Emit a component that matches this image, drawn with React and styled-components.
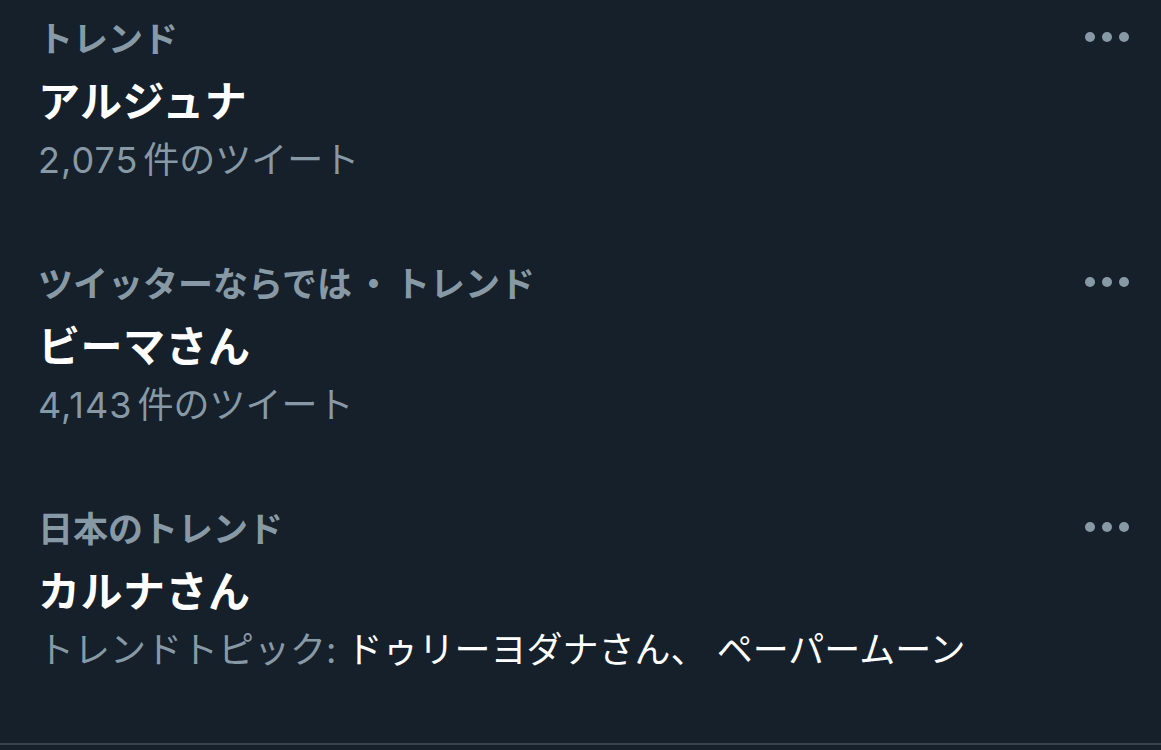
import styled, { createGlobalStyle } from 'styled-components';

const GlobalStyle = createGlobalStyle`
  html, body {
    margin: 0;
    padding: 0;
    background: #15202b;
  }
  body {
    font-family: "Noto Sans CJK JP", "Noto Sans", sans-serif;
  }
`;

const Page = styled.div`
  width: 1161px;
  height: 750px;
  background: #15202b;
  overflow: hidden;
`;

const List = styled.div`
  display: flex;
  flex-direction: column;
  padding-bottom: 8px;
  border-bottom: 2px solid #38444d;
`;

const TrendItem = styled.div`
  padding: 14px 32px 62px 38px;
  display: flex;
  flex-direction: column;
`;

const TopRow = styled.div`
  display: flex;
  justify-content: space-between;
  align-items: center;
  height: 46px;
`;

const Category = styled.span`
  color: #8899a6;
  font-size: 35px;
  font-weight: 700;
  line-height: 46px;
  white-space: nowrap;
`;

const Sep = styled.span`
  margin: 0 4px;
`;

const MoreButton = styled.button`
  background: none;
  border: none;
  padding: 0;
  display: flex;
  gap: 7px;
  cursor: pointer;
`;

const Dot = styled.span`
  width: 10px;
  height: 10px;
  border-radius: 50%;
  background: #8899a6;
`;

const Title = styled.div`
  margin-top: 10px;
  color: #ffffff;
  font-size: 42px;
  font-weight: 700;
  line-height: 58px;
  letter-spacing: 0.5px;
`;

const Meta = styled.div`
  margin-top: 9px;
  color: #8899a6;
  font-family: "Inter", "Noto Sans CJK JP", sans-serif;
  font-size: 36px;
  font-weight: 400;
  line-height: 46px;
  white-space: nowrap;
`;

const Count = styled.span`
  margin-right: 5px;
  letter-spacing: 1px;
`;

const Topics = styled.span`
  color: #ffffff;
`;

const trends = [
  { category: ['トレンド'], title: 'アルジュナ', count: '2,075', meta: '件のツイート' },
  { category: ['ツイッターならでは', 'トレンド'], title: 'ビーマさん', count: '4,143', meta: '件のツイート' },
  {
    category: ['日本のトレンド'],
    title: 'カルナさん',
    meta: 'トレンドトピック:',
    topics: ' ドゥリーヨダナさん、 ペーパームーン',
  },
];

export default function App() {
  return (
    <>
      <GlobalStyle />
      <Page>
        <List>
          {trends.map((t) => (
            <TrendItem key={t.title}>
              <TopRow>
                <Category>
                  {t.category[0]}
                  {t.category[1] && (
                    <>
                      <Sep>・</Sep>
                      {t.category[1]}
                    </>
                  )}
                </Category>
                <MoreButton aria-label="その他">
                  <Dot />
                  <Dot />
                  <Dot />
                </MoreButton>
              </TopRow>
              <Title>{t.title}</Title>
              <Meta>
                {t.count && <Count>{t.count}</Count>}
                {t.meta}
                {t.topics && <Topics>{t.topics}</Topics>}
              </Meta>
            </TrendItem>
          ))}
        </List>
      </Page>
    </>
  );
}
